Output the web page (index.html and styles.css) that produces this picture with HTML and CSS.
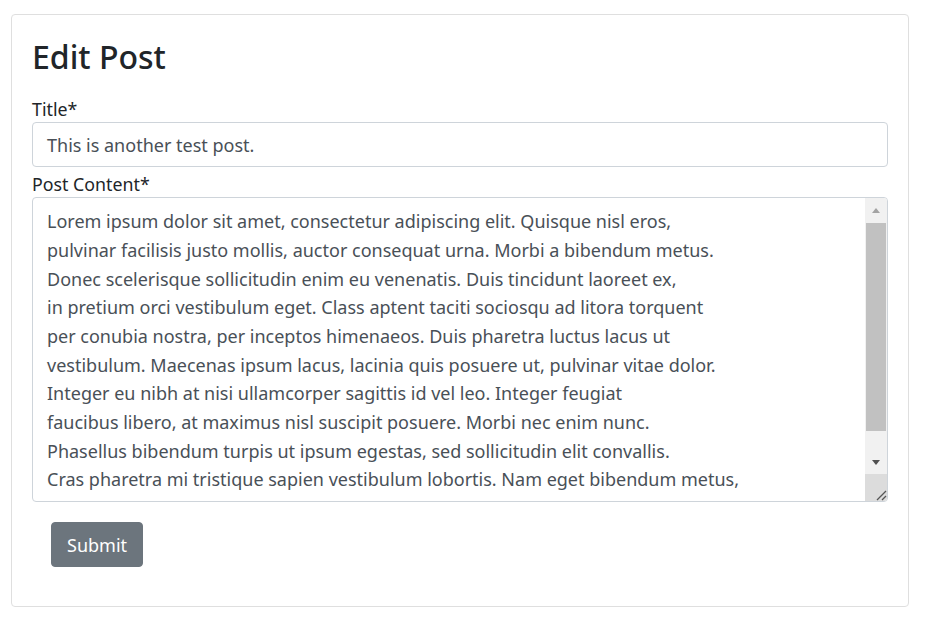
FILE: index.html
```html
<!DOCTYPE html>
<html lang="en">
<head>
<meta charset="utf-8">
<title>Edit Post</title>
<link rel="stylesheet" href="styles.css">
</head>
<body>
<div class="card">
  <div class="card-body">
    <h2 class="heading">Edit Post</h2>
    <form class="form">
      <label class="label" for="title">Title*</label>
      <div class="input" id="title">This is another test post.</div>
      <label class="label" for="content">Post Content*</label>
      <div class="textarea" id="content">
        <div class="textarea-clip">
          <div class="textarea-text">Lorem ipsum dolor sit amet, consectetur adipiscing elit. Quisque nisl eros,
pulvinar facilisis justo mollis, auctor consequat urna. Morbi a bibendum metus.
Donec scelerisque sollicitudin enim eu venenatis. Duis tincidunt laoreet ex,
in pretium orci vestibulum eget. Class aptent taciti sociosqu ad litora torquent
per conubia nostra, per inceptos himenaeos. Duis pharetra luctus lacus ut
vestibulum. Maecenas ipsum lacus, lacinia quis posuere ut, pulvinar vitae dolor.
Integer eu nibh at nisi ullamcorper sagittis id vel leo. Integer feugiat
faucibus libero, at maximus nisl suscipit posuere. Morbi nec enim nunc.
Phasellus bibendum turpis ut ipsum egestas, sed sollicitudin elit convallis.
Cras pharetra mi tristique sapien vestibulum lobortis. Nam eget bibendum metus,
sit amet varius dui. Suspendisse potenti. Nullam ut elementum ligula.
Aliquam erat volutpat. Fusce at magna quis nisl blandit pretium.</div>
        </div>
        <div class="scrollbar">
          <div class="sb-btn">
            <svg width="8" height="5" viewBox="0 0 8 5"><path d="M0 5 L4 0 L8 5 Z" fill="#a3a3a3"/></svg>
          </div>
          <div class="sb-track"><div class="sb-thumb"></div></div>
          <div class="sb-btn">
            <svg width="8" height="5" viewBox="0 0 8 5"><path d="M0 0 L8 0 L4 5 Z" fill="#505050"/></svg>
          </div>
          <div class="sb-corner">
            <svg width="14" height="14" viewBox="0 0 14 14"><path d="M13 4 L4 13 M13 9 L9 13" stroke="#555" stroke-width="1.3" fill="none"/></svg>
          </div>
        </div>
      </div>
      <button type="button" class="btn">Submit</button>
    </form>
  </div>
</div>
</body>
</html>
```

FILE: styles.css
```css
* { box-sizing: border-box; }
html, body { margin: 0; padding: 0; background: #fff; }
body {
  font-family: "Noto Sans", "Open Sans", sans-serif;
  font-size: 16px;
  color: #212529;
}
.card {
  margin: 14px 0 0 11px;
  width: 898px;
  border: 1px solid #dfdfdf;
  border-radius: 4px;
}
.card-body { padding: 20px 20px 21px 20px; }
.heading {
  margin: 3px 0 21px 0;
  font-size: 32px;
  font-weight: 500;
  line-height: 1.2;
}
.form { display: flex; flex-direction: column; align-items: stretch; }
.label {
  display: block;
  font-size: 17.8px;
  line-height: 24px;
  margin-bottom: 1px;
  color: #212529;
}
.input {
  height: 45px;
  border: 1px solid #ced4da;
  border-radius: 4px;
  padding: 0 14px;
  display: flex;
  align-items: center;
  font-size: 18px;
  color: #495057;
  margin-bottom: 5px;
}
.textarea {
  height: 305px;
  border: 1px solid #ced4da;
  border-radius: 4px;
  display: flex;
  overflow: hidden;
}
.textarea-clip {
  flex: 1;
  overflow: hidden;
  padding: 9px 14px 0 14px;
}
.textarea-text {
  white-space: pre;
  font-size: 18px;
  line-height: 28.67px;
  color: #495057;
}
.scrollbar {
  width: 22px;
  display: flex;
  flex-direction: column;
  background: #f1f1f1;
}
.sb-btn {
  height: 24px;
  display: flex;
  align-items: center;
  justify-content: center;
}
.sb-track { height: 228px; padding: 1px 1px 0 1px; }
.sb-thumb { height: 208px; background: #c1c1c1; }
.sb-corner {
  height: 27px;
  background: #dcdcdc;
  display: flex;
  align-items: flex-end;
  justify-content: flex-end;
}
.btn {
  align-self: flex-start;
  margin: 20px 0 18px 19px;
  height: 45px;
  padding: 0 15px;
  border: 1px solid #6c757d;
  border-radius: 4px;
  background: #6c757d;
  color: #fff;
  font-family: inherit;
  font-size: 18px;
}
```
